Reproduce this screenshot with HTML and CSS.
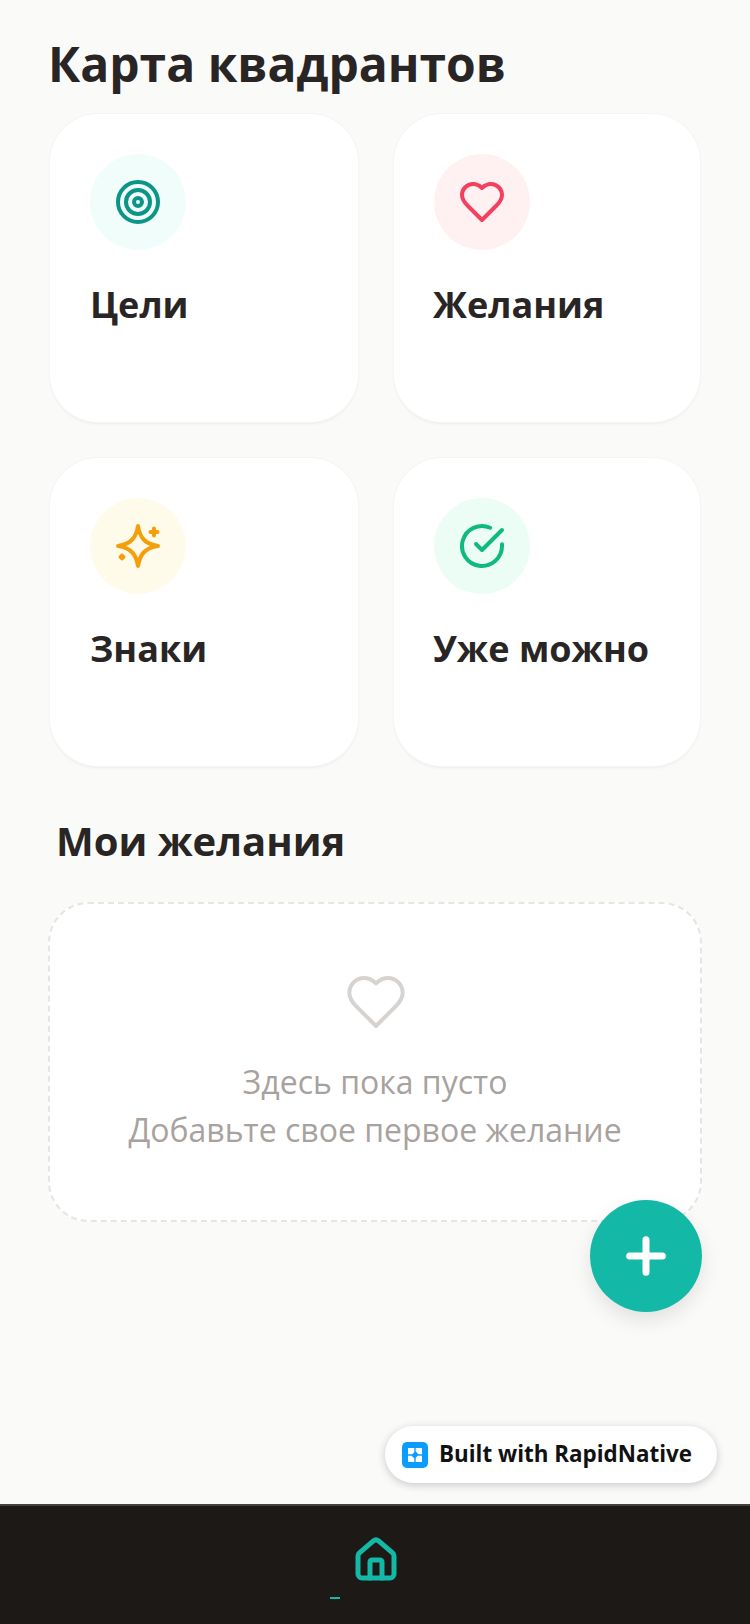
FILE: index.html
```html
<!DOCTYPE html>
<html lang="ru">
<head>
    <meta charset="UTF-8">
    <meta name="viewport" content="width=device-width, initial-scale=1.0">
    <title>Карта квадрантов</title>
    <link rel="stylesheet" href="styles.css">
</head>
<body>

<div class="screen">
    <main class="content">
        <h1 class="title">Карта квадрантов</h1>

        <div class="grid">
            <div class="card">
                <div class="circle circle-teal">
                    <svg class="icon icon-teal" viewBox="0 0 24 24">
                        <circle cx="12" cy="12" r="10"/>
                        <circle cx="12" cy="12" r="6"/>
                        <circle cx="12" cy="12" r="2"/>
                    </svg>
                </div>
                <div class="card-title">Цели</div>
            </div>
            <div class="card">
                <div class="circle circle-rose">
                    <svg class="icon icon-rose" viewBox="0 0 24 24">
                        <path d="M19 14c1.49-1.46 3-3.21 3-5.5A5.5 5.5 0 0 0 16.5 3c-1.76 0-3 .5-4.5 2-1.5-1.5-2.74-2-4.5-2A5.5 5.5 0 0 0 2 8.5c0 2.3 1.5 4.05 3 5.5l7 7Z"/>
                    </svg>
                </div>
                <div class="card-title card-title-tight">Желания</div>
            </div>
            <div class="card">
                <div class="circle circle-amber">
                    <svg class="icon icon-amber" viewBox="0 0 24 24">
                        <path d="M12 2C13 8 15.500 11 22 12 15.500 13 13 16 12 22 11 16 8.500 13 2 12 8.500 11 11 8 12 2Z"/>
                        <path d="M20 3.250v3.500M18.250 5h3.500"/>
                        <path d="M4 16.750v1.500M3.250 17.500h1.500"/>
                    </svg>
                </div>
                <div class="card-title">Знаки</div>
            </div>
            <div class="card">
                <div class="circle circle-green">
                    <svg class="icon icon-green" viewBox="0 0 24 24">
                        <path d="M22 11.08V12a10 10 0 1 1-5.93-9.14"/>
                        <path d="m9 11 3 3L22 4"/>
                    </svg>
                </div>
                <div class="card-title card-title-tight">Уже можно</div>
            </div>
        </div>

        <h2 class="section-title">Мои желания</h2>

        <div class="empty">
            <svg class="empty-icon" viewBox="0 0 24 24">
                <path d="M19 14c1.49-1.46 3-3.21 3-5.5A5.5 5.5 0 0 0 16.5 3c-1.76 0-3 .5-4.5 2-1.5-1.5-2.74-2-4.5-2A5.5 5.5 0 0 0 2 8.5c0 2.3 1.5 4.05 3 5.5l7 7Z"/>
            </svg>
            <p class="empty-text">Здесь пока пусто</p>
            <p class="empty-text">Добавьте свое первое желание</p>
        </div>
    </main>

    <button class="fab" type="button" aria-label="Добавить">
        <svg class="fab-icon" viewBox="0 0 24 24">
            <path d="M5 12h14M12 5v14"/>
        </svg>
    </button>

    <div class="badge">
        <svg class="badge-logo" viewBox="0 0 26 26">
            <rect width="26" height="26" rx="5" fill="#0a9cff"/>
            <path d="M6 6h6.300v4.200l-2.100 2.100H6zM13.700 6H20v6.300h-3.600l-2.700-2.700zM6 13.700h3.600l2.700 2.700V20H6zM15.800 13.700H20V20h-6.300v-4.200z" fill="#fff"/>
        </svg>
        <span class="badge-text">Built with RapidNative</span>
    </div>

    <nav class="tabbar">
        <svg class="tab-icon" viewBox="0 0 24 24">
            <path d="M15 21v-8a1 1 0 0 0-1-1h-4a1 1 0 0 0-1 1v8"/>
            <path d="M3 10a2 2 0 0 1 .709-1.528l7-5.999a2 2 0 0 1 2.582 0l7 5.999A2 2 0 0 1 21 10v9a2 2 0 0 1-2 2H5a2 2 0 0 1-2-2z"/>
        </svg>
        <span class="tab-mark"></span>
    </nav>
</div>

</body>
</html>
```

FILE: styles.css
```css
* {
    box-sizing: border-box;
}
body {
    font-family: "Open Sans", "Noto Sans", sans-serif;
    background-color: #fafaf9;
    color: #292524;
    margin: 0;
}
.screen {
    position: relative;
    width: 750px;
    height: 1624px;
    display: flex;
    flex-direction: column;
    overflow: hidden;
}
.content {
    flex: 1;
    padding: 28px 48px 0 49px;
}
.title {
    margin: 0 0 0 -1px;
    font-size: 48px;
    line-height: 72px;
    font-weight: 700;
}
.grid {
    margin: 14px 0 0 1px;
    display: grid;
    grid-template-columns: 308px 306px;
    column-gap: 36px;
    row-gap: 36px;
}
.card {
    height: 308px;
    padding: 40px;
    background-color: #fff;
    border-radius: 48px;
    box-shadow: 0 0 0 1px #f5f5f4, 0 2px 3px rgba(0, 0, 0, 0.06);
}
.circle {
    width: 96px;
    height: 96px;
    border-radius: 50%;
    display: flex;
    align-items: center;
    justify-content: center;
}
.circle-teal { background-color: #f0fdfa; }
.circle-rose { background-color: #fff1f2; }
.circle-amber { background-color: #fffbeb; }
.circle-green { background-color: #ecfdf5; }
.icon {
    width: 48px;
    height: 48px;
    fill: none;
    stroke-width: 2;
    stroke-linecap: round;
    stroke-linejoin: round;
}
.icon-teal { stroke: #0d9488; }
.icon-rose { stroke: #f43f5e; }
.icon-amber { stroke: #f59e0b; }
.icon-green { stroke: #10b981; }
.card-title {
    margin-top: 28px;
    font-size: 36px;
    line-height: 54px;
    font-weight: 700;
}
.card-title-tight {
    margin-left: -1px;
}
.section-title {
    margin: 45px 0 0 7px;
    font-size: 40px;
    line-height: 60px;
    font-weight: 700;
}
.empty {
    margin: 31px 0 0 -1px;
    height: 320px;
    padding-top: 66px;
    background-color: #fff;
    border: 2px dashed #e7e5e4;
    border-radius: 40px;
    display: flex;
    flex-direction: column;
    align-items: center;
}
.empty-icon {
    width: 64px;
    height: 64px;
    margin-left: 2px;
    fill: none;
    stroke: #d6d3d1;
    stroke-width: 1.5;
    stroke-linecap: round;
    stroke-linejoin: round;
}
.empty-text {
    margin: 0;
    font-size: 32px;
    line-height: 48px;
    color: #a8a29e;
}
.empty-icon + .empty-text {
    margin-top: 24px;
}
.fab {
    position: absolute;
    left: 590px;
    top: 1200px;
    width: 112px;
    height: 112px;
    padding: 0;
    border: none;
    border-radius: 50%;
    background-color: #14b8a6;
    box-shadow: 0 8px 20px rgba(0, 0, 0, 0.1);
    display: flex;
    align-items: center;
    justify-content: center;
}
.fab-icon {
    width: 56px;
    height: 56px;
    fill: none;
    stroke: #fff;
    stroke-width: 3;
    stroke-linecap: round;
}
.badge {
    position: absolute;
    left: 385px;
    top: 1426px;
    width: 332px;
    height: 57px;
    padding: 0 0 2px 17px;
    background-color: #fff;
    border-radius: 29px;
    box-shadow: 0 2px 8px rgba(0, 0, 0, 0.2);
    display: flex;
    align-items: center;
    gap: 11px;
}
.badge-logo {
    width: 26px;
    height: 26px;
    margin-top: 2px;
}
.badge-text {
    font-size: 22.4px;
    font-weight: 700;
    color: #111;
}
.tabbar {
    position: relative;
    height: 120px;
    background-color: #1c1917;
    border-top: 2px solid #44403c;
    display: flex;
    justify-content: center;
    padding: 30px 0 0 2px;
}
.tab-icon {
    width: 48px;
    height: 48px;
    fill: none;
    stroke: #14b8a6;
    stroke-width: 2.5;
    stroke-linecap: round;
    stroke-linejoin: round;
}
.tab-mark {
    position: absolute;
    left: 330px;
    top: 91px;
    width: 10px;
    height: 2px;
    background-color: #14b8a6;
}
```
